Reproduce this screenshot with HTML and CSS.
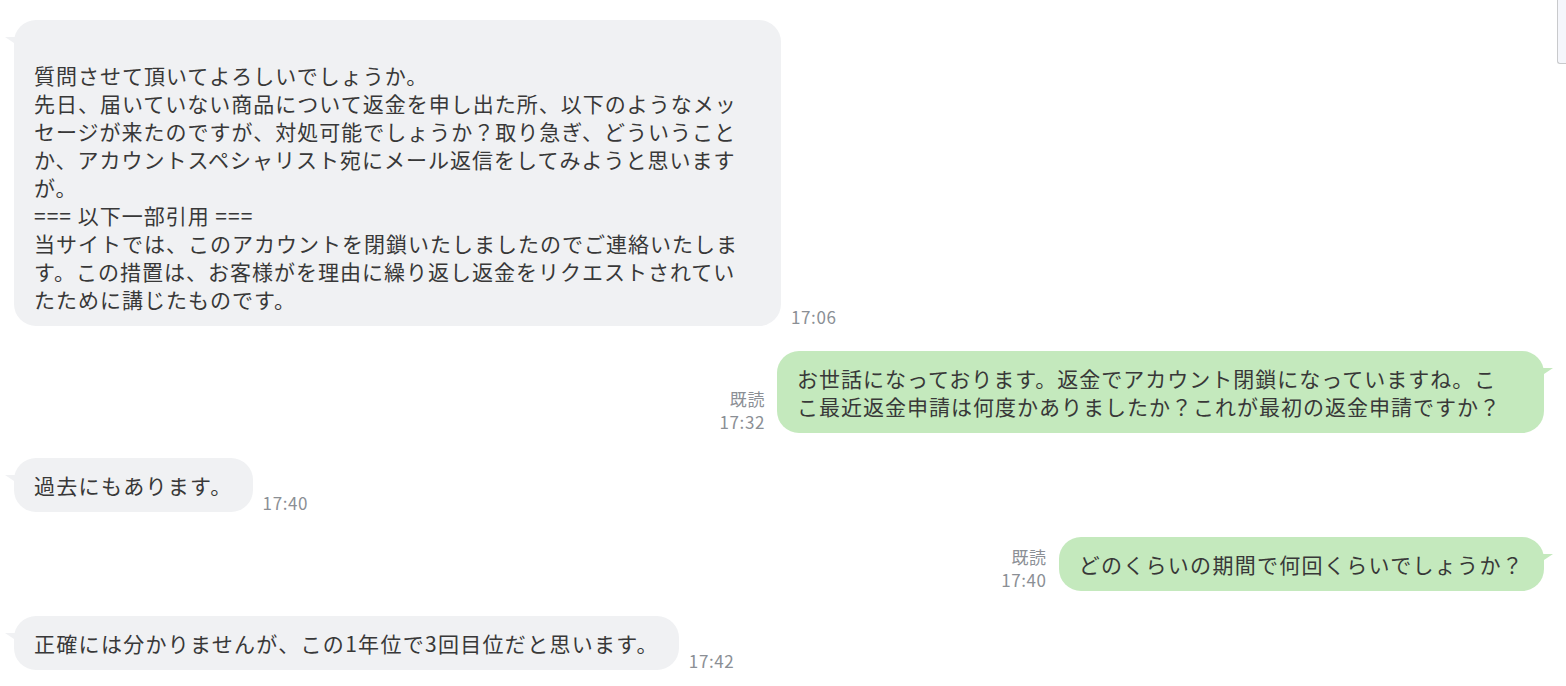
FILE: index.html
```html
<!DOCTYPE html>
<html lang="ja">
<head>
<meta charset="utf-8">
<title>Chat</title>
<link rel="stylesheet" href="styles.css">
</head>
<body>
<div class="edge-tab"></div>
<main class="chat">
  <div class="row row-in">
    <div class="bubble bubble-in bubble-full"><br>質問させて頂いてよろしいでしょうか。<br>先日、届いていない商品について返金を申し出た所、以下のようなメッ<br>セージが来たのですが、対処可能でしょうか？取り急ぎ、どういうこと<br>か、アカウントスペシャリスト宛にメール返信をしてみようと思います<br>が。<br>=== 以下一部引用 ===<br>当サイトでは、このアカウントを閉鎖いたしましたのでご連絡いたしま<br>す。この措置は、お客様がを理由に繰り返し返金をリクエストされてい<br>たために講じたものです。</div>
    <div class="meta meta-in">17:06</div>
  </div>
  <div class="row row-out">
    <div class="meta meta-out"><span>既読</span><span>17:32</span></div>
    <div class="bubble bubble-out bubble-full">お世話になっております。返金でアカウント閉鎖になっていますね。こ<br>こ最近返金申請は何度かありましたか？これが最初の返金申請ですか？</div>
  </div>
  <div class="row row-in">
    <div class="bubble bubble-in">過去にもあります。</div>
    <div class="meta meta-in">17:40</div>
  </div>
  <div class="row row-out">
    <div class="meta meta-out"><span>既読</span><span>17:40</span></div>
    <div class="bubble bubble-out">どのくらいの期間で何回くらいでしょうか？</div>
  </div>
  <div class="row row-in">
    <div class="bubble bubble-in">正確には分かりませんが、この1年位で3回目位だと思います。</div>
    <div class="meta meta-in">17:42</div>
  </div>
</main>
</body>
</html>
```

FILE: styles.css
```css
html, body {
  margin: 0;
  padding: 0;
  background: #ffffff;
}

body {
  font-family: "Noto Sans CJK JP", "Noto Sans", sans-serif;
  color: #383838;
}

.chat {
  display: flex;
  flex-direction: column;
  gap: 25px;
  padding: 20px 22px 0 14px;
}

.row {
  display: flex;
  align-items: flex-end;
}

.row-in {
  justify-content: flex-start;
  gap: 10px;
}

.row-out {
  justify-content: flex-end;
  gap: 12px;
}

.bubble {
  position: relative;
  box-sizing: border-box;
  max-width: 768px;
  padding: 13px 20px;
  border-radius: 22px;
  font-size: 21px;
  line-height: 28px;
  letter-spacing: 1.3px;
  white-space: nowrap;
}

.bubble-full {
  width: 767px;
  letter-spacing: 1px;
}

.bubble-in {
  background: #f0f1f3;
}

.bubble-out {
  background: #c4e9bd;
}

.bubble-in::before,
.bubble-out::before {
  content: "";
  position: absolute;
  top: 17px;
  width: 12px;
  height: 8px;
}

.bubble-in::before {
  left: -9px;
  background: #f0f1f3;
  clip-path: polygon(0 0, 100% 0, 100% 100%);
}

.bubble-out::before {
  right: -9px;
  background: #c4e9bd;
  clip-path: polygon(0 0, 100% 0, 0 100%);
}

.meta {
  font-size: 17px;
  color: #8b8f95;
  letter-spacing: 0.6px;
}

.meta-in {
  line-height: 18px;
}

.meta-out {
  display: flex;
  flex-direction: column;
  align-items: flex-end;
  line-height: 23px;
}

.edge-tab {
  position: fixed;
  top: 0;
  right: 0;
  width: 8px;
  height: 63px;
  background: #f5f6fb;
  border-left: 1px solid #c9cacc;
  border-bottom: 1px solid #c9cacc;
  border-bottom-left-radius: 3px;
}
```
